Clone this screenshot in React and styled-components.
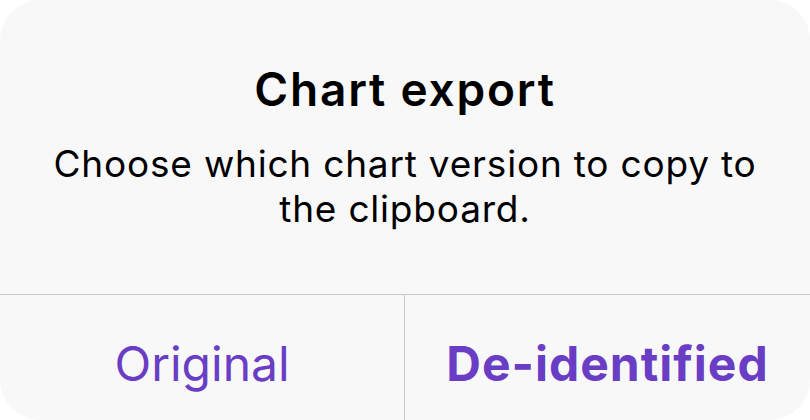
import React from 'react';
import styled, { createGlobalStyle } from 'styled-components';

const GlobalStyle = createGlobalStyle`
  html, body {
    margin: 0;
    padding: 0;
    background: #ffffff;
  }
  body {
    font-family: Inter, "Noto Sans", sans-serif;
    -webkit-font-smoothing: antialiased;
  }
`;

const Alert = styled.div`
  width: 810px;
  height: 420px;
  box-sizing: border-box;
  background: #f8f8f8;
  border-radius: 40px;
  display: flex;
  flex-direction: column;
  overflow: hidden;
`;

const Content = styled.div`
  height: 295px;
  box-sizing: border-box;
  padding: 62px 45px 0;
  text-align: center;
  border-bottom: 1px solid #c9c9c9;
`;

const Title = styled.h1`
  margin: 0;
  font-size: 46px;
  font-weight: 600;
  letter-spacing: 1.8px;
  line-height: 54px;
  color: #000;
`;

const Message = styled.p`
  margin: 25px 0 0;
  font-size: 37px;
  font-weight: 400;
  letter-spacing: 0.8px;
  line-height: 45px;
  color: #000;
`;

const Actions = styled.div`
  flex: 1;
  display: grid;
  grid-template-columns: 404px 1fr;
`;

const ActionButton = styled.button`
  border: none;
  background: transparent;
  padding: 12px 0 0;
  margin: 0;
  font-family: inherit;
  font-size: 48px;
  font-weight: ${(p) => (p.$primary ? 700 : 400)};
  letter-spacing: ${(p) => (p.$primary ? '1px' : '0')};
  color: #6a3dc5;
  cursor: pointer;
  border-left: ${(p) => (p.$divided ? '1px solid #c9c9c9' : 'none')};
`;

export default function App() {
  return (
    <>
      <GlobalStyle />
      <Alert>
        <Content>
          <Title>Chart export</Title>
          <Message>Choose which chart version to copy to the clipboard.</Message>
        </Content>
        <Actions>
          <ActionButton>Original</ActionButton>
          <ActionButton $primary $divided>De-identified</ActionButton>
        </Actions>
      </Alert>
    </>
  );
}
